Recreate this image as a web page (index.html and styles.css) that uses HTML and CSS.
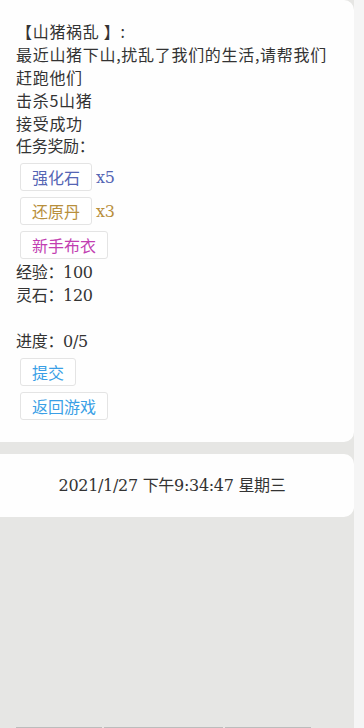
FILE: index.html
```html
<!DOCTYPE html>
<html lang="zh">
<head>
<meta charset="utf-8">
<link rel="stylesheet" href="styles.css">
</head>
<body>
<div class="page">
  <section class="card task">
    <div class="sans">【山猪祸乱 】:</div>
    <div class="sans">最近山猪下山,扰乱了我们的生活,请帮我们赶跑他们</div>
    <div class="sans">击杀5山猪</div>
    <div class="sans">接受成功</div>
    <div>任务奖励：</div>
    <div class="rewards">
      <div class="reward"><span class="tag blue">强化石</span><span class="qty blue">x5</span></div>
      <div class="reward"><span class="tag gold">还原丹</span><span class="qty gold">x3</span></div>
      <div class="reward"><span class="tag pink">新手布衣</span></div>
    </div>
    <div>经验：100</div>
    <div>灵石：120</div>
    <div class="blank"></div>
    <div>进度：0/5</div>
    <div class="actions">
      <span class="tag sky">提交</span>
      <span class="tag sky">返回游戏</span>
    </div>
  </section>
  <section class="card clock">2021/1/27 下午9:34:47 星期三</section>
</div>
<div class="tabbar">
  <span class="tab t1"></span>
  <span class="tab t2"></span>
  <span class="tab t3"></span>
</div>
</body>
</html>
```
FILE: styles.css
```css
html, body {
  margin: 0;
  padding: 0;
  background: #f5f5f5;
}
body {
  width: 364px;
  height: 728px;
  overflow: hidden;
  font-family: "DejaVu Serif", "Noto Sans CJK SC", serif;
  font-size: 16px;
  line-height: 23px;
  letter-spacing: -0.3px;
  color: #333;
}
.page {
  width: 354px;
  height: 728px;
  background: #e6e6e4;
  overflow: hidden;
}
.card {
  margin-left: -10px;
  background: #fefefe;
  border-radius: 10px;
}
.task {
  padding: 20px 16px 22px 26px;
}
.sans {
  font-family: "Noto Sans CJK SC", sans-serif;
  letter-spacing: 0.7px;
}
.rewards {
  display: flex;
  flex-direction: column;
  gap: 6px;
  margin: 5px 0 2px 4px;
}
.reward {
  display: flex;
  align-items: center;
  gap: 4px;
}
.tag {
  display: inline-block;
  box-sizing: border-box;
  height: 28px;
  line-height: 26px;
  padding: 0 11px;
  border: 1px solid #e4e4e4;
  border-radius: 3px;
  background: #fff;
  font-family: "Noto Sans CJK SC", sans-serif;
  letter-spacing: 0;
}
.qty {
  font-family: "DejaVu Serif", serif;
}
.blue { color: #5565b4; }
.gold { color: #b88f3c; }
.pink { color: #c23fb2; }
.sky { color: #3a9fe6; }
.blank { height: 23px; }
.actions {
  display: flex;
  flex-direction: column;
  align-items: flex-start;
  gap: 6px;
  margin: 5px 0 0 4px;
}
.clock {
  margin-top: 12px;
  padding: 20px 0;
  text-align: center;
}
.tabbar {
  position: fixed;
  left: 0;
  bottom: 0;
  width: 354px;
  height: 1px;
  display: flex;
}
.tab {
  height: 1px;
  background: #bcbcbc;
}
.t1 { margin-left: 16px; width: 86px; }
.t2 { margin-left: 2px; width: 119px; }
.t3 { margin-left: 2px; width: 86px; }
```
